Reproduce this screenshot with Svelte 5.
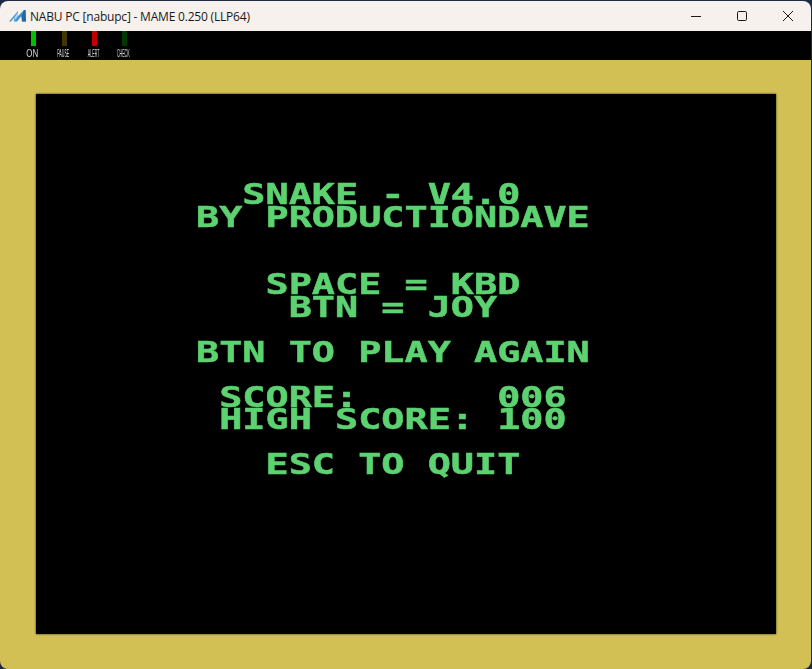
<script>
  const leds = [
    { label: 'ON', color: '#00c000', cls: 'wide' },
    { label: 'PAUSE', color: '#403800', cls: '' },
    { label: 'ALERT', color: '#c00000', cls: '' },
    { label: 'CHECK', color: '#003800', cls: '' }
  ];
  const lines = [
    '  SNAKE - V4.0',
    'BY PRODUCTIONDAVE',
    '',
    '',
    '   SPACE = KBD',
    '    BTN = JOY',
    '',
    'BTN TO PLAY AGAIN',
    '',
    ' SCORE:      006',
    ' HIGH SCORE: 100',
    '',
    '   ESC TO QUIT'
  ];
</script>

<div class="desktop">
  <div class="window">
    <header class="titlebar">
      <svg class="logo" width="17" height="14" viewBox="0 0 17 14">
        <path d="M0 12.5 L9 2 L9 7 L15 1 L16.500 1 L17 12.5 L13 12.5 L12.500 7 L8 12.500 L5 12.500 L5.500 8 L2 12.5 Z" fill="#3f93cf" />
        <path d="M12.5 7 L15 1 L16.500 1 L17 12.5 L13 12.5 Z" fill="#23689f" />
        <path d="M5.5 8 L9 3 L9 7 L6.500 11 Z" fill="#a6d4ef" />
      </svg>
      <span class="title">NABU PC [nabupc] - MAME 0.250 (LLP64)</span>
      <div class="controls">
        <svg width="12" height="12" viewBox="0 0 12 12"><path d="M1 6.5H11" stroke="#1a1a1a" fill="none" /></svg>
        <svg width="12" height="12" viewBox="0 0 12 12"><rect x="1.5" y="1.5" width="9" height="9" rx="1.2" stroke="#1a1a1a" fill="none" /></svg>
        <svg width="12" height="12" viewBox="0 0 12 12"><path d="M1 1L11 11M11 1L1 11" stroke="#1a1a1a" fill="none" /></svg>
      </div>
    </header>

    <div class="ledbar">
      {#each leds as led}
        <div class="led">
          <div class="lamp" style:background={led.color}></div>
          <span class="label {led.cls}">{led.label}</span>
        </div>
      {/each}
    </div>

    <main class="cabinet">
      <div class="screen">
        <pre class="text">{lines.join('\n')}</pre>
      </div>
    </main>
  </div>
</div>

<style>
  :global(body) {
    margin: 0;
    background: #1c2a44;
  }
  .desktop {
    width: 812px;
    height: 669px;
    overflow: hidden;
    background: #1c2a44;
  }
  .window {
    width: 811px;
    height: 668px;
    margin-top: 1px;
    border-radius: 8px;
    overflow: hidden;
    display: flex;
    flex-direction: column;
  }
  .titlebar {
    height: 30px;
    flex: none;
    background: #f7f1ed;
    display: flex;
    align-items: center;
    padding-left: 9px;
    box-sizing: border-box;
  }
  .logo {
    flex: none;
    margin-right: 4px;
  }
  .title {
    font-family: "Open Sans", sans-serif;
    font-size: 12px;
    letter-spacing: -0.2px;
    color: #1a1a1a;
    white-space: nowrap;
  }
  .controls {
    margin-left: auto;
    display: flex;
    gap: 34px;
    padding-right: 17px;
  }
  .ledbar {
    height: 29px;
    flex: none;
    background: #000;
    display: flex;
    padding-left: 23px;
    gap: 9px;
  }
  .led {
    width: 21px;
    display: flex;
    flex-direction: column;
    align-items: center;
  }
  .led:first-child {
    margin-right: 1px;
  }
  .lamp {
    width: 5px;
    height: 15px;
    flex: none;
  }
  .label {
    display: block;
    margin-top: 2px;
    margin-right: 2px;
    font-family: "Liberation Sans", sans-serif;
    font-size: 11px;
    line-height: 11px;
    color: #d8d8d8;
    transform: scaleX(0.33);
    white-space: nowrap;
  }
  .label.wide {
    margin-right: 3px;
    transform: scaleX(0.72);
  }
  .cabinet {
    flex: 1;
    background: #d2c054;
    padding: 34px 35px 35px 36px;
    box-sizing: border-box;
    display: flex;
  }
  .screen {
    flex: 1;
    background: #000;
    box-shadow: 0 0 2px 0 rgba(0, 0, 0, 0.8);
    padding: 90px 0 0 160px;
    overflow: hidden;
  }
  .text {
    margin: 0;
    font-family: "DejaVu Sans Mono", monospace;
    font-weight: 700;
    font-size: 28.5px;
    line-height: 22.5px;
    color: #5cd271;
    -webkit-text-stroke: 0.5px #5cd271;
    transform: scaleX(1.35);
    transform-origin: 0 0;
    filter: blur(0.4px);
  }
</style>
